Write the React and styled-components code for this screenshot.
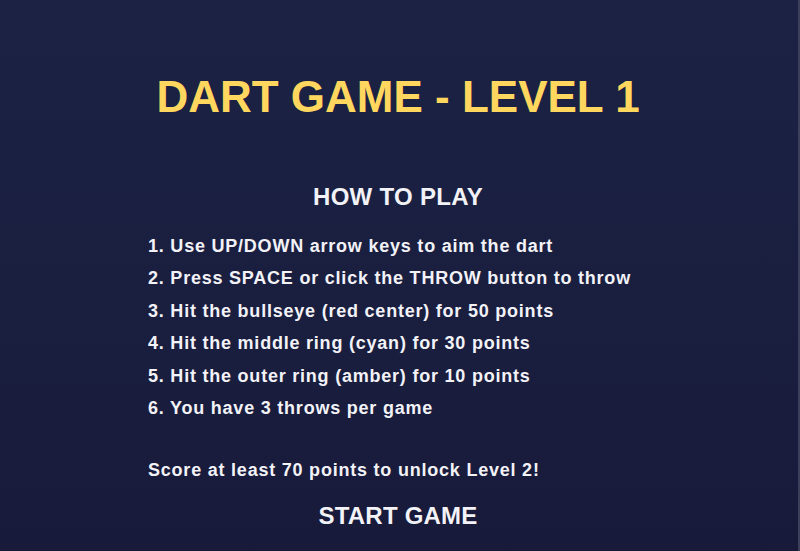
import React from 'react';
import styled, { createGlobalStyle } from 'styled-components';

const GlobalStyle = createGlobalStyle`
  html, body {
    margin: 0;
    padding: 0;
    background: #181a3a;
  }

  * {
    box-sizing: border-box;
  }
`;

const Screen = styled.div`
  width: 800px;
  height: 551px;
  overflow: hidden;

  display: flex;
  flex-direction: column;
  align-items: center;
  padding-top: 70px;
  padding-right: 2px;

  background: linear-gradient(180deg, #1b2244 0%, #1a1f40 50%, #181a3a 100%);
  border-right: 2px solid #3b3f5a;

  font-family: "Liberation Sans", Arial, sans-serif;
  color: #f2f2f7;
`;

const Title = styled.h1`
  margin: 0;
  font-size: 44px;
  line-height: 54px;
  font-weight: 700;
  color: #ffd75e;
`;

const SectionTitle = styled.h2`
  margin: 58px 0 0;
  font-size: 24px;
  line-height: 30px;
  font-weight: 700;
  letter-spacing: 0.3px;
`;

const Rules = styled.ol`
  width: 500px;
  margin: 18px 0 0;
  padding: 0;
  list-style: none;
`;

const Rule = styled.li`
  font-size: 18px;
  line-height: 32.4px;
  font-weight: 700;
  letter-spacing: 0.78px;
`;

const Goal = styled.p`
  width: 500px;
  margin: 29.6px 0 0;
  font-size: 18px;
  line-height: 32.4px;
  font-weight: 700;
  letter-spacing: 0.78px;
`;

const StartButton = styled.button`
  margin-top: 15px;
  padding: 0;
  border: none;
  background: transparent;
  cursor: pointer;

  font-family: inherit;
  font-size: 24px;
  line-height: 30px;
  font-weight: 700;
  letter-spacing: 0.2px;
  color: #f2f2f7;
`;

const RULES = [
  'Use UP/DOWN arrow keys to aim the dart',
  'Press SPACE or click the THROW button to throw',
  'Hit the bullseye (red center) for 50 points',
  'Hit the middle ring (cyan) for 30 points',
  'Hit the outer ring (amber) for 10 points',
  'You have 3 throws per game',
];

const App = () => (
  <>
    <GlobalStyle />
    <Screen>
      <Title>DART GAME - LEVEL 1</Title>
      <SectionTitle>HOW TO PLAY</SectionTitle>
      <Rules>
        {RULES.map((rule, i) => (
          <Rule key={rule}>{`${i + 1}. ${rule}`}</Rule>
        ))}
      </Rules>
      <Goal>Score at least 70 points to unlock Level 2!</Goal>
      <StartButton type="button">START GAME</StartButton>
    </Screen>
  </>
);

export default App;
